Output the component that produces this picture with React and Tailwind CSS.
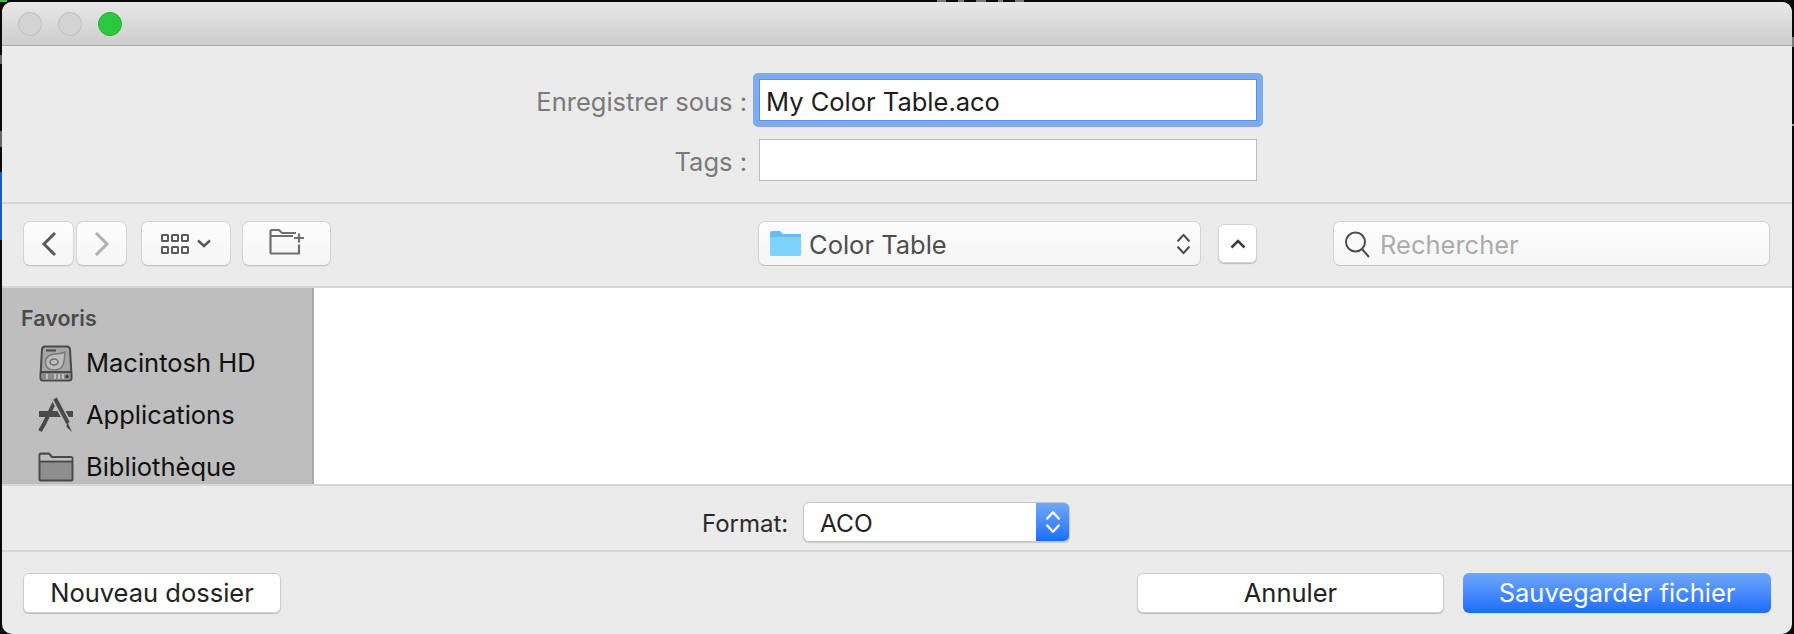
import React from 'react';

const ui = "font-['Inter','Liberation_Sans',sans-serif]";

function Chevrons({ className }) {
  return (
    <svg viewBox="0 0 14 22" className={className} fill="none" stroke="currentColor" strokeWidth="2" strokeLinecap="round" strokeLinejoin="round">
      <path d="M2 8 L7 2.5 L12 8" />
      <path d="M2 14 L7 19.5 L12 14" />
    </svg>
  );
}

function ToolButton({ className, children }) {
  return (
    <div className={`h-[45px] flex items-center justify-center rounded-[7px] border border-[#d4d4d4] border-b-[#c4c4c4] bg-gradient-to-b from-[#fdfdfd] to-[#f5f5f5] shadow-[0_1px_0_rgba(0,0,0,0.05)] ${className}`}>
      {children}
    </div>
  );
}

function DriveIcon() {
  return (
    <svg viewBox="0 0 34 37" className="w-[34px] h-[37px]">
      <path d="M6 1.5 H28 Q31 1.5 31 5 L32.5 30 V33 Q32.5 35.5 30 35.5 H4 Q1.500 35.500 1.500 33 V30 L3 5 Q3 1.500 6 1.500 Z" fill="#a6a6a6" stroke="#4a4a4a" strokeWidth="2" />
      <path d="M2 27 H32" stroke="#4a4a4a" strokeWidth="2" />
      <rect x="3" y="28" width="28" height="6.500" fill="#8b8b8b" />
      <path d="M8 29 V34 M16 29 V34 M20 29 V34 M24 29 V34" stroke="#d0d0d0" strokeWidth="1.500" />
      <circle cx="28" cy="31.500" r="1.500" fill="#333" />
      <path d="M7 5.500 H17" stroke="#4a4a4a" strokeWidth="2" />
      <path d="M26 7 C25 16 26 25 15 25 C9 25 6.500 21 6.500 17 C6.500 12 11 9 17 9 C20 9 24 8 26 7 Z" fill="#bdbdbd" stroke="#7a7a7a" strokeWidth="1.500" />
      <ellipse cx="15" cy="17" rx="4" ry="3" fill="none" stroke="#6e6e6e" strokeWidth="1.500" />
    </svg>
  );
}

function AppsIcon() {
  return (
    <svg viewBox="0 0 36 36" className="w-[36px] h-[36px]">
      <path d="M1 14 H35 V20 H1 Z" fill="#4a4a4a" />
      <path d="M17 4 L6 27 L2 34" fill="none" stroke="#4a4a4a" strokeWidth="4" />
      <path d="M17 2 L30 26" fill="none" stroke="#bdbdbd" strokeWidth="7" />
      <path d="M17 1.500 L30 26" fill="none" stroke="#4a4a4a" strokeWidth="4" />
      <path d="M29 24 L34 35 L28.500 30 Z" fill="#4a4a4a" />
    </svg>
  );
}

function FolderIcon() {
  return (
    <svg viewBox="0 0 36 30" className="w-[36px] h-[30px]">
      <path d="M1.500 27 V3 Q1.500 1.500 3 1.500 H11 L14 5 H33 Q34.500 5 34.500 6.500 V27 Q34.500 28.500 33 28.500 H3 Q1.500 28.500 1.500 27 Z" fill="#8e8e8e" stroke="#4a4a4a" strokeWidth="2" />
      <path d="M2 9.500 H34" stroke="#4a4a4a" strokeWidth="2" />
      <path d="M2.500 3 H11 L13 6 V8.500 H2.500 Z M13 6 H33.500 V8.500 H13 Z" fill="#bdbdbd" />
    </svg>
  );
}

function SidebarRow({ icon, label, className }) {
  return (
    <div className={`flex items-center h-[52px] ${className}`}>
      <div className="w-[36px] flex justify-center">{icon}</div>
      <span className="ml-[12px] text-[25.500px] text-[#111]">{label}</span>
    </div>
  );
}

export default function App() {
  return (
    <div className={`relative h-[634px] w-full overflow-hidden bg-[#0a0a0a] pt-[2px] pl-[2px] pr-[2px] ${ui}`}>
      {/* bits of desktop showing around the window */}
      <div className="absolute left-0 top-0 w-[7px] h-[2px] bg-[#2cc840]" />
      <div className="absolute left-[937px] top-0 flex gap-[12px]">
        <div className="w-[9px] h-[2px] bg-[#777]" />
        <div className="w-[6px] h-[2px] bg-[#777]" />
        <div className="w-[10px] h-[2px] bg-[#777]" />
        <div className="w-[5px] h-[2px] bg-[#777]" />
        <div className="w-[9px] h-[2px] bg-[#777]" />
      </div>
      <div className="absolute left-0 top-[55px] w-[2px] h-[9px] bg-[#666]" />
      <div className="absolute left-0 top-[131px] w-[2px] h-[16px] bg-[#666]" />
      <div className="absolute left-0 top-[172px] w-[2px] h-[68px] bg-[#1560bd]" />
      <div className="absolute right-0 top-[37px] w-[2px] h-[10px] bg-[#777]" />
      <div className="absolute right-0 top-[124px] w-[2px] h-[2px] bg-[#999]" />

      <div className="h-full overflow-hidden rounded-[10px] bg-[#ebebeb] flex flex-col">
        {/* title bar */}
        <div className="h-[44px] shrink-0 flex items-center gap-[16px] pl-[16px] border-b border-[#a8a8a8] bg-gradient-to-b from-[#e8e8e8] to-[#cdcdcd]">
          <div className="w-[24px] h-[24px] rounded-full bg-[#d4d4d4] border border-[#bcbcbc]" />
          <div className="w-[24px] h-[24px] rounded-full bg-[#d4d4d4] border border-[#bcbcbc]" />
          <div className="w-[24px] h-[24px] rounded-full bg-[#2cc840] border border-[#26ad36]" />
        </div>

        {/* save as fields */}
        <div className="h-[158px] shrink-0 border-b-2 border-[#d6d6d6] flex flex-col pl-[534px]">
          <div className="flex items-center mt-[27px] h-[54px]">
            <span className="w-[211px] pt-[4px] text-right text-[25.500px] text-[#7a7a7a] whitespace-nowrap">Enregistrer sous :</span>
            <div className="ml-[6px] w-[510px] h-[54px] p-[6px] rounded-[5px] bg-[#7eaaee]">
              <div className="h-full bg-white border border-[#5c8fdf] flex items-center pl-[6px] pt-[4px] text-[25.500px] text-[#1c1c1c]">My Color Table.aco</div>
            </div>
          </div>
          <div className="flex items-center mt-[12px] h-[42px]">
            <span className="w-[211px] pt-[4px] text-right text-[25.500px] text-[#7a7a7a]">Tags :</span>
            <div className="ml-[12px] w-[498px] h-[42px] bg-white border border-[#bdbdbd]" />
          </div>
        </div>

        {/* toolbar */}
        <div className="h-[84px] shrink-0 border-b-2 border-[#d6d6d6] flex items-center pl-[21px] pb-[3px]">
          <ToolButton className="w-[51px] text-[#5a5a5a]">
            <svg viewBox="0 0 16 26" className="w-[16px] h-[26px]" fill="none" stroke="currentColor" strokeWidth="3"><path d="M14 2 L3 13 L14 24" /></svg>
          </ToolButton>
          <ToolButton className="ml-[2px] w-[51px] text-[#b0b0b0]">
            <svg viewBox="0 0 16 26" className="w-[16px] h-[26px]" fill="none" stroke="currentColor" strokeWidth="3"><path d="M2 2 L13 13 L2 24" /></svg>
          </ToolButton>
          <ToolButton className="ml-[14px] w-[90px] gap-[8px] text-[#5a5a5a]">
            <div className="grid grid-cols-3 gap-x-[2px] gap-y-[4px]">
              {[0, 1, 2, 3, 4, 5].map((i) => (
                <div key={i} className="w-[8px] h-[8px] rounded-[1.500px] border-2 border-[#5a5a5a]" />
              ))}
            </div>
            <svg viewBox="0 0 14 9" className="w-[14px] h-[9px]" fill="none" stroke="currentColor" strokeWidth="2.500"><path d="M1 1.500 L7 7 L13 1.500" /></svg>
          </ToolButton>
          <ToolButton className="ml-[11px] w-[89px] text-[#707070]">
            <svg viewBox="0 0 36 26" className="w-[36px] h-[26px] mb-[3px]" fill="none" stroke="currentColor" strokeWidth="2.200"><path d="M30 15.500 V24.500 H3 Q1.500 24.500 1.500 23 V2.500 Q1.500 1 3 1 H10 L13 4 H27 M2 7 H24 M35 9 H25 M30 4.500 V13.500" /></svg>
          </ToolButton>

          <div className="ml-[427px] w-[443px] h-[45px] rounded-[7px] border border-[#d4d4d4] border-b-[#bdbdbd] bg-gradient-to-b from-[#fdfdfd] to-[#f5f5f5] flex items-center pl-[11px] pr-[9px]">
            <svg viewBox="0 0 31 25" className="w-[31px] h-[25px]">
              <path d="M0 2 Q0 0 2 0 H10 L13 3 H30 Q31 3 31 4 V8 H0 Z" fill="#63bdf2" />
              <path d="M0 6 H31 V23.500 Q31 25 29.500 25 H1.500 Q0 25 0 23.500 Z" fill="#7dd3fc" />
            </svg>
            <span className="ml-[8px] pt-[4px] text-[25.500px] text-[#4e4e4e]">Color Table</span>
            <Chevrons className="ml-auto w-[15px] h-[24px] text-[#4e4e4e]" />
          </div>
          <div className="ml-[17px] w-[39px] h-[39px] rounded-[6px] bg-white border border-[#d4d4d4] shadow-[0_1px_1px_rgba(0,0,0,0.2)] flex items-center justify-center text-[#3c3c3c]">
            <svg viewBox="0 0 16 10" className="w-[16px] h-[10px]" fill="none" stroke="currentColor" strokeWidth="2.500"><path d="M1.500 8.500 L8 2 L14.500 8.500" /></svg>
          </div>

          <div className="ml-[76px] w-[437px] h-[45px] rounded-[7px] border border-[#d4d4d4] border-b-[#c4c4c4] bg-gradient-to-b from-[#fdfdfd] to-[#f6f6f6] flex items-center pl-[10px]">
            <svg viewBox="0 0 26 28" className="w-[26px] h-[28px] text-[#4c4c4c]" fill="none" stroke="currentColor" strokeWidth="2"><circle cx="11.500" cy="12" r="9.500" /><path d="M18 19 L25 27" /></svg>
            <span className="ml-[10px] pt-[4px] text-[25.500px] text-[#acacac]">Rechercher</span>
          </div>
        </div>

        {/* file browser */}
        <div className="h-[196px] shrink-0 flex bg-white overflow-hidden">
          <div className="w-[312px] shrink-0 bg-[#bebebe] border-r-2 border-[#a9a9a9] pl-[19px] pt-[15px] overflow-hidden">
            <div className="text-[21.500px] font-semibold text-[#4b4b4b] leading-[30px]">Favoris</div>
            <SidebarRow className="mt-[4px] pl-[17px]" icon={<DriveIcon />} label="Macintosh HD" />
            <SidebarRow className="pl-[17px]" icon={<AppsIcon />} label="Applications" />
            <SidebarRow className="pl-[17px]" icon={<FolderIcon />} label="Bibliothèque" />
          </div>
        </div>

        {/* format */}
        <div className="h-[68px] shrink-0 border-y-2 border-[#d6d6d6] flex items-center pl-[700px] pt-[8px]">
          <span className="w-[85px] pt-[4px] text-[24px] text-[#2a2a2a] whitespace-nowrap">Format:</span>
          <div className="ml-[16px] w-[267px] h-[40px] flex rounded-[6px] bg-white border border-[#c8c8c8] overflow-hidden shadow-[0_1px_1px_rgba(0,0,0,0.15)]">
            <span className="flex-1 pl-[16px] pt-[1px] text-[24.500px] leading-[38px] text-[#222]">ACO</span>
            <div className="w-[33px] flex items-center justify-center bg-gradient-to-b from-[#6fa6f8] to-[#1a6cff] text-white">
              <Chevrons className="w-[16px] h-[26px]" />
            </div>
          </div>
        </div>

        {/* actions */}
        <div className="flex-1 flex items-start pt-[21px] pl-[21px] pr-[21px]">
          <div className="w-[258px] h-[40px] rounded-[6px] bg-white border border-[#cfcfcf] shadow-[0_1px_1px_rgba(0,0,0,0.2)] flex items-center justify-center text-[25.500px] text-[#222]">Nouveau dossier</div>
          <div className="ml-auto w-[307px] h-[40px] rounded-[6px] bg-white border border-[#cfcfcf] shadow-[0_1px_1px_rgba(0,0,0,0.2)] flex items-center justify-center text-[25.500px] text-[#222]">Annuler</div>
          <div className="ml-[19px] w-[308px] h-[40px] rounded-[6px] bg-gradient-to-b from-[#6fa6f8] to-[#1a6cff] flex items-center justify-center text-[25.500px] text-white">Sauvegarder fichier</div>
        </div>
      </div>
    </div>
  );
}
